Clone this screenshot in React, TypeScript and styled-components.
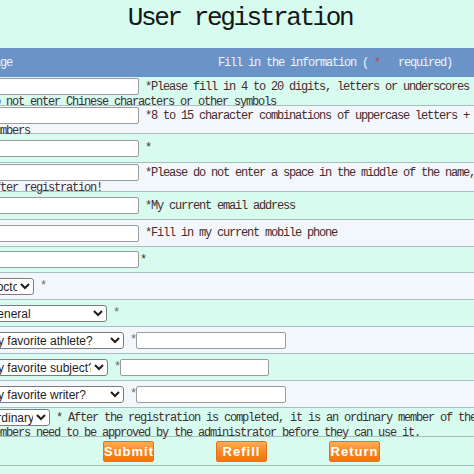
import React from 'react';
import styled, {createGlobalStyle} from 'styled-components';

const GlobalStyle = createGlobalStyle`
  html, body {
    margin: 0;
    padding: 0;
    overflow: hidden;
    background: #d7fbef;
  }
  body {
    font-family: 'Liberation Mono', 'Courier New', monospace;
  }
`;

const Viewport = styled.div`
  width: 474px;
  height: 474px;
  overflow: hidden;
`;

// the screenshot is a crop of a wider page, the label column sits left of the view
const Sheet = styled.div`
  width: 730px;
  margin-left: -125px;
`;

const Title = styled.h1`
  margin: 0;
  height: 48px;
  text-align: center;
  font: normal 26px/37px 'Liberation Mono', monospace;
  letter-spacing: -2.4px;
  color: #161616;
`;

const Header = styled.div`
  display: grid;
  grid-template-columns: 137px 1fr;
  align-items: center;
  height: 29px;
  background: #6a94c8;
  color: #eef3fa;
  font-size: 12px;
  letter-spacing: -1.2px;
  white-space: pre;
`;

const HeaderLeft = styled.span`
  text-align: right;
`;

const HeaderRight = styled.span`
  padding-left: 206px;
`;

const Req = styled.span`
  color: #d8343a;
`;

const Row = styled.div<{$h: number; $alt?: boolean; $tall?: boolean}>`
  display: flex;
  align-items: ${(p) => (p.$tall ? 'flex-start' : 'center')};
  box-sizing: border-box;
  height: ${(p) => p.$h}px;
  padding-top: ${(p) => (p.$tall ? 1 : 0)}px;
  background: ${(p) => (p.$alt ? '#f1f7fa' : '#d7fbef')};
  border-bottom: 1px solid #a6bebe;
`;

const Label = styled.div`
  flex: none;
  box-sizing: border-box;
  width: 110px;
  padding-right: 6px;
  text-align: right;
  font-size: 12px;
  color: #333;
`;

const Field = styled.div`
  display: flex;
  flex-direction: column;
  padding-left: 3px;
  white-space: pre;
`;

const Line = styled.div`
  display: flex;
  align-items: center;
  height: 17px;
`;

const WrapLine = styled.div`
  height: 12px;
  margin-top: 1px;
  line-height: 12px;
  font-size: 12px;
  letter-spacing: -1.2px;
  color: #472b2e;
`;

const Note = styled.span<{$gap?: number}>`
  margin-left: ${(p) => p.$gap ?? 0}px;
  font-size: 12px;
  line-height: 14px;
  letter-spacing: -1.2px;
  color: #472b2e;
`;

const Star = styled.span`
  margin-left: 6px;
  font-size: 12px;
  letter-spacing: -1.2px;
  color: #6a6a6a;
`;

const TextInput = styled.input<{$w?: number}>`
  box-sizing: border-box;
  width: ${(p) => p.$w ?? 151}px;
  height: 17px;
  margin: 0;
  padding: 0 3px;
  border: 1px solid #9c9c9c;
  border-radius: 2px;
  background: #fff;
`;

const Select = styled.select<{$w: number}>`
  box-sizing: border-box;
  width: ${(p) => p.$w}px;
  height: 17px;
  margin: 0 0 0 -7px;
  padding: 0 0 0 2px;
  border: 1px solid #7c7c7c;
  border-radius: 3px;
  background: #fff;
  color: #1e1e1e;
  font: 12px 'Liberation Sans', Arial, sans-serif;
`;

const Actions = styled.div`
  display: flex;
  gap: 62px;
  margin-left: 115px;
`;

const ActionButton = styled.button`
  width: 51px;
  height: 21px;
  padding: 0;
  border: 1px solid #e5731d;
  border-radius: 2px;
  background: linear-gradient(#fbae5c, #f5861f 55%, #ef7610);
  color: #fff;
  font: bold 13px 'Liberation Sans', Arial, sans-serif;
  letter-spacing: 1px;
  white-space: nowrap;
  overflow: hidden;
`;

const App: React.FC = () => {
  return (
    <>
      <GlobalStyle />
      <Viewport>
        <Sheet>
          <Title>User registration</Title>
          <Header>
            <HeaderLeft>Registration page</HeaderLeft>
            <HeaderRight>
              Fill in the information ( <Req>*</Req>   required)
            </HeaderRight>
          </Header>

          <Row $h={29} $tall>
            <Label>Username:</Label>
            <Field>
              <Line>
                <TextInput />
                <Note $gap={6}>*Please fill in 4 to 20 digits, letters or underscores</Note>
              </Line>
              <WrapLine>Do not enter Chinese characters or other symbols</WrapLine>
            </Field>
          </Row>

          <Row $h={28} $alt $tall>
            <Label>Password:</Label>
            <Field>
              <Line>
                <TextInput type="password" />
                <Note $gap={6}>*8 to 15 character combinations of uppercase letters +</Note>
              </Line>
              <WrapLine>numbers</WrapLine>
            </Field>
          </Row>

          <Row $h={29}>
            <Label>Confirm:</Label>
            <Field>
              <Line>
                <TextInput type="password" />
                <Note $gap={6}>*</Note>
              </Line>
            </Field>
          </Row>

          <Row $h={29} $alt $tall>
            <Label>Real name:</Label>
            <Field>
              <Line>
                <TextInput />
                <Note $gap={6}>*Please do not enter a space in the middle of the name,</Note>
              </Line>
              <WrapLine>after registration!</WrapLine>
            </Field>
          </Row>

          <Row $h={28}>
            <Label>Email:</Label>
            <Field>
              <Line>
                <TextInput />
                <Note $gap={6}>*My current email address</Note>
              </Line>
            </Field>
          </Row>

          <Row $h={27} $alt>
            <Label>Mobile:</Label>
            <Field>
              <Line>
                <TextInput />
                <Note $gap={6}>*Fill in my current mobile phone</Note>
              </Line>
            </Field>
          </Row>

          <Row $h={26}>
            <Label>ID card:</Label>
            <Field>
              <Line>
                <TextInput />
                <Note $gap={1}>*</Note>
              </Line>
            </Field>
          </Row>

          <Row $h={27} $alt>
            <Label>Title:</Label>
            <Field>
              <Line>
                <Select $w={53} defaultValue="doctor">
                  <option value="doctor">Doctor</option>
                  <option value="master">Master</option>
                </Select>
                <Star>*</Star>
              </Line>
            </Field>
          </Row>

          <Row $h={27}>
            <Label>Group:</Label>
            <Field>
              <Line>
                <Select $w={126} defaultValue="general">
                  <option value="general">General</option>
                </Select>
                <Star>*</Star>
              </Line>
            </Field>
          </Row>

          <Row $h={27} $alt>
            <Label>Question 1:</Label>
            <Field>
              <Line>
                <Select $w={143}>
                  <option>My favorite athlete?</option>
                </Select>
                <Star>*</Star>
                <TextInput $w={150} />
              </Line>
            </Field>
          </Row>

          <Row $h={27}>
            <Label>Question 2:</Label>
            <Field>
              <Line>
                <Select $w={127}>
                  <option>My favorite subject?</option>
                </Select>
                <Star>*</Star>
                <TextInput $w={149} />
              </Line>
            </Field>
          </Row>

          <Row $h={27} $alt>
            <Label>Question 3:</Label>
            <Field>
              <Line>
                <Select $w={143}>
                  <option>My favorite writer?</option>
                </Select>
                <Star>*</Star>
                <TextInput $w={150} />
              </Line>
            </Field>
          </Row>

          <Row $h={29} $tall>
            <Label>Member:</Label>
            <Field>
              <Line>
                <Select $w={69}>
                  <option>Ordinary</option>
                </Select>
                <Note $gap={6}>* After the registration is completed, it is an ordinary member of the</Note>
              </Line>
              <WrapLine>members need to be approved by the administrator before they can use it.</WrapLine>
            </Field>
          </Row>

          <Row $h={29}>
            <Label />
            <Field>
              <Actions>
                <ActionButton type="submit">Submit</ActionButton>
                <ActionButton type="reset">Refill</ActionButton>
                <ActionButton type="button">Return</ActionButton>
              </Actions>
            </Field>
          </Row>
        </Sheet>
      </Viewport>
    </>
  );
};

export default App;
